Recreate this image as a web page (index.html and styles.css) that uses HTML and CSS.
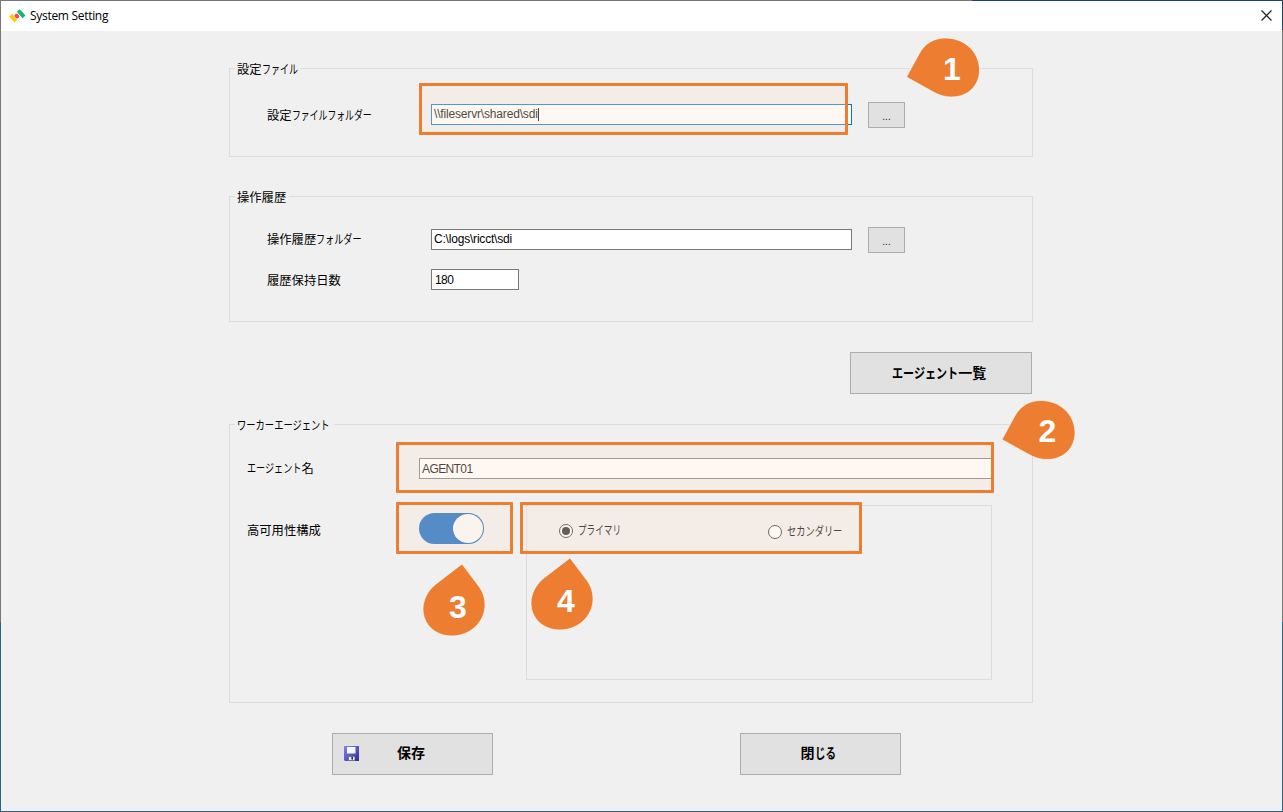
FILE: index.html
```html
<!DOCTYPE html>
<html lang="ja">
<head>
<meta charset="utf-8">
<title>System Setting</title>
<link rel="stylesheet" href="styles.css">
</head>
<body>
<div class="window">
  <header class="titlebar">
    <svg class="logo" width="18" height="16" viewBox="0 0 18 16"><g stroke-width="4"><path stroke="#fdca0c" d="M2.500 7.200 8 13"/><path stroke="#f5455c" stroke-linecap="round" d="M8.500 7.600 9.300 8.400"/><path stroke="#0cba67" d="M10.300 2.500 16 8.800"/></g></svg>
    <h1 class="title">System Setting</h1>
    <svg class="close" width="11" height="11" viewBox="0 0 11 11"><path d="M.5.5 10.5 10.5M10.5.5.5 10.5" stroke="#222" stroke-width="1.2"/></svg>
  </header>
  <main class="client">
    <fieldset class="group files">
      <legend>設定<span class="kana">ファイル</span></legend>
      <div class="row">
        <label class="label">設定<span class="kana k-narrow">ファイルフォルダー</span></label>
        <div class="field focused"><span class="path-a">\\fileservr\shared\sdi</span><i class="caret"></i></div>
        <button class="browse">...</button>
      </div>
    </fieldset>
    <fieldset class="group history">
      <legend>操作履歴</legend>
      <div class="row">
        <label class="label">操作履歴<span class="kana k-folder">フォルダー</span></label>
        <div class="field"><span class="path-b">C:\logs\ricct\sdi</span></div>
        <button class="browse">...</button>
      </div>
      <div class="row days">
        <label class="label">履歴保持日数</label>
        <div class="field short"><span class="num">180</span></div>
      </div>
    </fieldset>
    <button class="button agents"><span class="kana k-agent">エージェント</span>一覧</button>
    <fieldset class="group worker">
      <legend><span class="kana k-worker">ワーカーエージェント</span></legend>
      <div class="row name">
        <label class="label"><span class="kana k-name">エージェント</span>名</label>
        <div class="field agent"><span class="agent-name">AGENT01</span></div>
      </div>
      <div class="row ha">
        <label class="label">高可用性構成</label>
        <div class="toggle"><i class="knob"></i></div>
        <div class="roles">
          <label class="radio checked"><i class="dot"></i><span class="kana k-primary">プライマリ</span></label>
          <label class="radio second"><i class="dot"></i><span class="kana k-second">セカンダリー</span></label>
        </div>
      </div>
    </fieldset>
    <footer class="actions">
      <button class="button save">
        <svg class="disk" width="15" height="15" viewBox="0 0 15 15"><defs><linearGradient id="d" x1="0" y1="0" x2="1" y2="1"><stop offset="0" stop-color="#8585ef"/><stop offset="1" stop-color="#2b2ba0"/></linearGradient></defs><path fill="url(#d)" d="M0 0h15v15H1L0 14z"/><path fill="#f5f8ff" d="M3 1h8.500v6.500H3z"/><path fill="#6f7488" d="M4 10h7v5H4z"/><path fill="#e8ece4" d="M5 11h2.500v3H5zM9 11h1.500v3H9z"/><path fill="#263050" d="M7.500 11h1.500v2H7.500z"/></svg>
        <span>保存</span>
      </button>
      <button class="button exit">閉<span class="kana k-exit">じる</span></button>
    </footer>
  </main>
</div>
<div class="mark m1"></div>
<div class="mark m2"></div>
<div class="mark m3"></div>
<div class="mark m4"></div>
<svg class="callouts" width="1283" height="812" viewBox="0 0 1283 812">
  <defs>
    <path id="side" d="M0 0 12-22C18-34 28-39 39-39 58-39 73-25 73-7 73 9 61 20 45 20 38 20 32 18 26 14.500Z"/>
    <path id="up" d="M0 0 17 22.500C21 28 23 34 23 41 23 58 8 72-10 72-26 72-39 61-39 45-39 36-34 26-26 20Z"/>
  </defs>
  <g class="drop"><use href="#side" x="906.500" y="77"/><use href="#side" x="1002" y="439.500"/><use href="#up" x="462" y="564"/><use href="#up" x="570" y="558"/></g>
  <g class="digits"><text x="952" y="79.500">1</text><text x="1047.500" y="442">2</text><text x="458" y="618">3</text><text x="566" y="612">4</text></g>
</svg>
</body>
</html>
```
FILE: styles.css
```css
* { box-sizing: border-box; }
body {
  margin: 0;
  width: 1283px;
  height: 812px;
  padding: 1px;
  position: relative;
  overflow: hidden;
  background:
    linear-gradient(#24406f, #24406f) 972px 0 / 311px 1px no-repeat,
    linear-gradient(#24406f, #24406f) 1282px 0 / 1px 30px no-repeat,
    linear-gradient(#286681, #286681) 0 622px / 1283px 190px no-repeat,
    #777;
  font: 12.300px/16px "Liberation Sans", "Noto Sans CJK JP", sans-serif;
  color: #000;
}
.window { width: 1281px; height: 810px; background: #f0f0f0; }
.titlebar { height: 30px; background: #fff; display: flex; align-items: center; padding: 0 10px 0 7px; }
.logo { margin-right: 4px; }
.close { margin-top: -2px; }
.title { flex: 1; margin: 0; font: 12px/16px "Open Sans", "Noto Sans", sans-serif; letter-spacing: -.3px; }
.client { padding: 37px 0 0 228px; width: 1032px; display: flex; flex-direction: column; }
.group { margin: 0; padding: 0; border: 1px solid #dcdcdc; width: 804px; min-width: 0; position: relative; }
.group legend { float: left; height: 16px; margin: -8px 0 0 5px; padding: 0 3px 0 2px; background: #f0f0f0; line-height: 18px; white-space: nowrap; }
.files { height: 89px; }
.history { height: 126px; margin-top: 39px; }
.worker { height: 279px; margin-top: 30px; }
.row { clear: both; display: flex; align-items: center; padding-left: 37px; }
.label { width: 164px; white-space: nowrap; }
.kana { display: inline-block; transform: scaleX(.73); transform-origin: 0 50%; }
.k-narrow { transform: scaleX(.72); }
.k-folder { transform: scaleX(.74); }
.files .row { padding-top: 25px; }
.files .label { padding-top: 1px; }
.history .row { padding-top: 22px; }
.history .days { padding-top: 17px; }
.field { width: 421px; height: 21px; border: 1px solid #7a7a7a; background: #fff; padding-left: 2px; font-size: 12px; line-height: 18px; display: flex; align-items: center; white-space: nowrap; }
.files .field, .history .field { position: relative; top: -1px; }
.history .days .field { top: -1px; }
.focused { border-color: #0078d7; }
.short { width: 88px; }
.path-a { letter-spacing: -.17px; }
.path-b { letter-spacing: -.2px; }
.num { letter-spacing: -.6px; padding-left: 1px; }
.agent-name { letter-spacing: -.6px; }
.caret { width: 1px; height: 13px; background: #000; }
button { font: inherit; color: #000; border: 1px solid #adadad; background: #e1e1e1; padding: 0; border-radius: 0; }
.browse { width: 37px; height: 26px; margin-left: 16px; padding-top: 3px; font-size: 10px; color: #222; }
.button { font-size: 14px; font-weight: bold; height: 42px; display: flex; align-items: center; justify-content: center; white-space: nowrap; }
.agents { width: 182px; margin: 30px 1px 0 0; align-self: flex-end; justify-content: flex-start; padding-left: 41px; }
.k-agent { transform: scaleX(.79); margin-right: -17.600px; }
.group legend .kana { margin-right: -13px; }
.group legend .k-worker { transform: scaleX(.755); margin-right: -29px; }
.k-name { transform: scaleX(.74); margin-right: -19px; }
.worker .row { padding-left: 17px; }
.worker .name { padding-top: 25px; }
.worker .label { width: 172px; }
.agent { width: 573px; }
.worker .ha { padding-top: 26px; align-items: flex-start; }
.ha .label { padding-top: 18px; }
.toggle { width: 65px; height: 31px; margin-top: 8px; border-radius: 16px; background: #0c65c2; padding: 1px; display: flex; justify-content: flex-end; }
.knob { width: 30px; height: 29px; border-radius: 50%; background: #fafafa; }
.roles { width: 466px; height: 175px; margin-left: 42px; border: 1px solid #dcdcdc; padding: 17px 0 0 32px; display: flex; align-items: flex-start; }
.worker .roles .radio { width: 209px; padding: 0; display: flex; align-items: center; height: 16px; white-space: nowrap; }
.dot { width: 14px; height: 14px; margin-right: 5px; border: 1px solid #333; border-radius: 50%; background: #fff; display: flex; align-items: center; justify-content: center; }
.checked .dot::after { content: ""; width: 8px; height: 8px; border-radius: 50%; background: #222; }
.second { margin-top: 1px; }
.k-primary { transform: scaleX(.7); }
.k-second { transform: scaleX(.75); }
.actions { display: flex; margin: 31px 0 0 103px; gap: 247px; }
.actions .button { margin-top: -1px; line-height: 14px; padding-bottom: 2px; }
.save, .exit { width: 161px; }
.save { justify-content: flex-start; padding-left: 11px; gap: 38px; }
.exit { padding-left: 2px; }
.k-exit { transform: scaleX(.75); }
.mark { position: absolute; border: 3px solid #ed7d31; border-radius: 1px; background: rgba(255, 227, 207, .3); background-clip: padding-box; }
.m1 { left: 419px; top: 83px; width: 429px; height: 52px; }
.m2 { left: 396px; top: 442px; width: 598px; height: 51px; }
.m3 { left: 396px; top: 502px; width: 117px; height: 52px; }
.m4 { left: 520px; top: 502px; width: 342px; height: 52px; }
.callouts { position: absolute; left: 0; top: 0; }
.drop { fill: #ed7d31; stroke: #fff; stroke-width: .6; }
.digits { fill: #fff; font: bold 32px "Liberation Sans", sans-serif; text-anchor: middle; }
```
